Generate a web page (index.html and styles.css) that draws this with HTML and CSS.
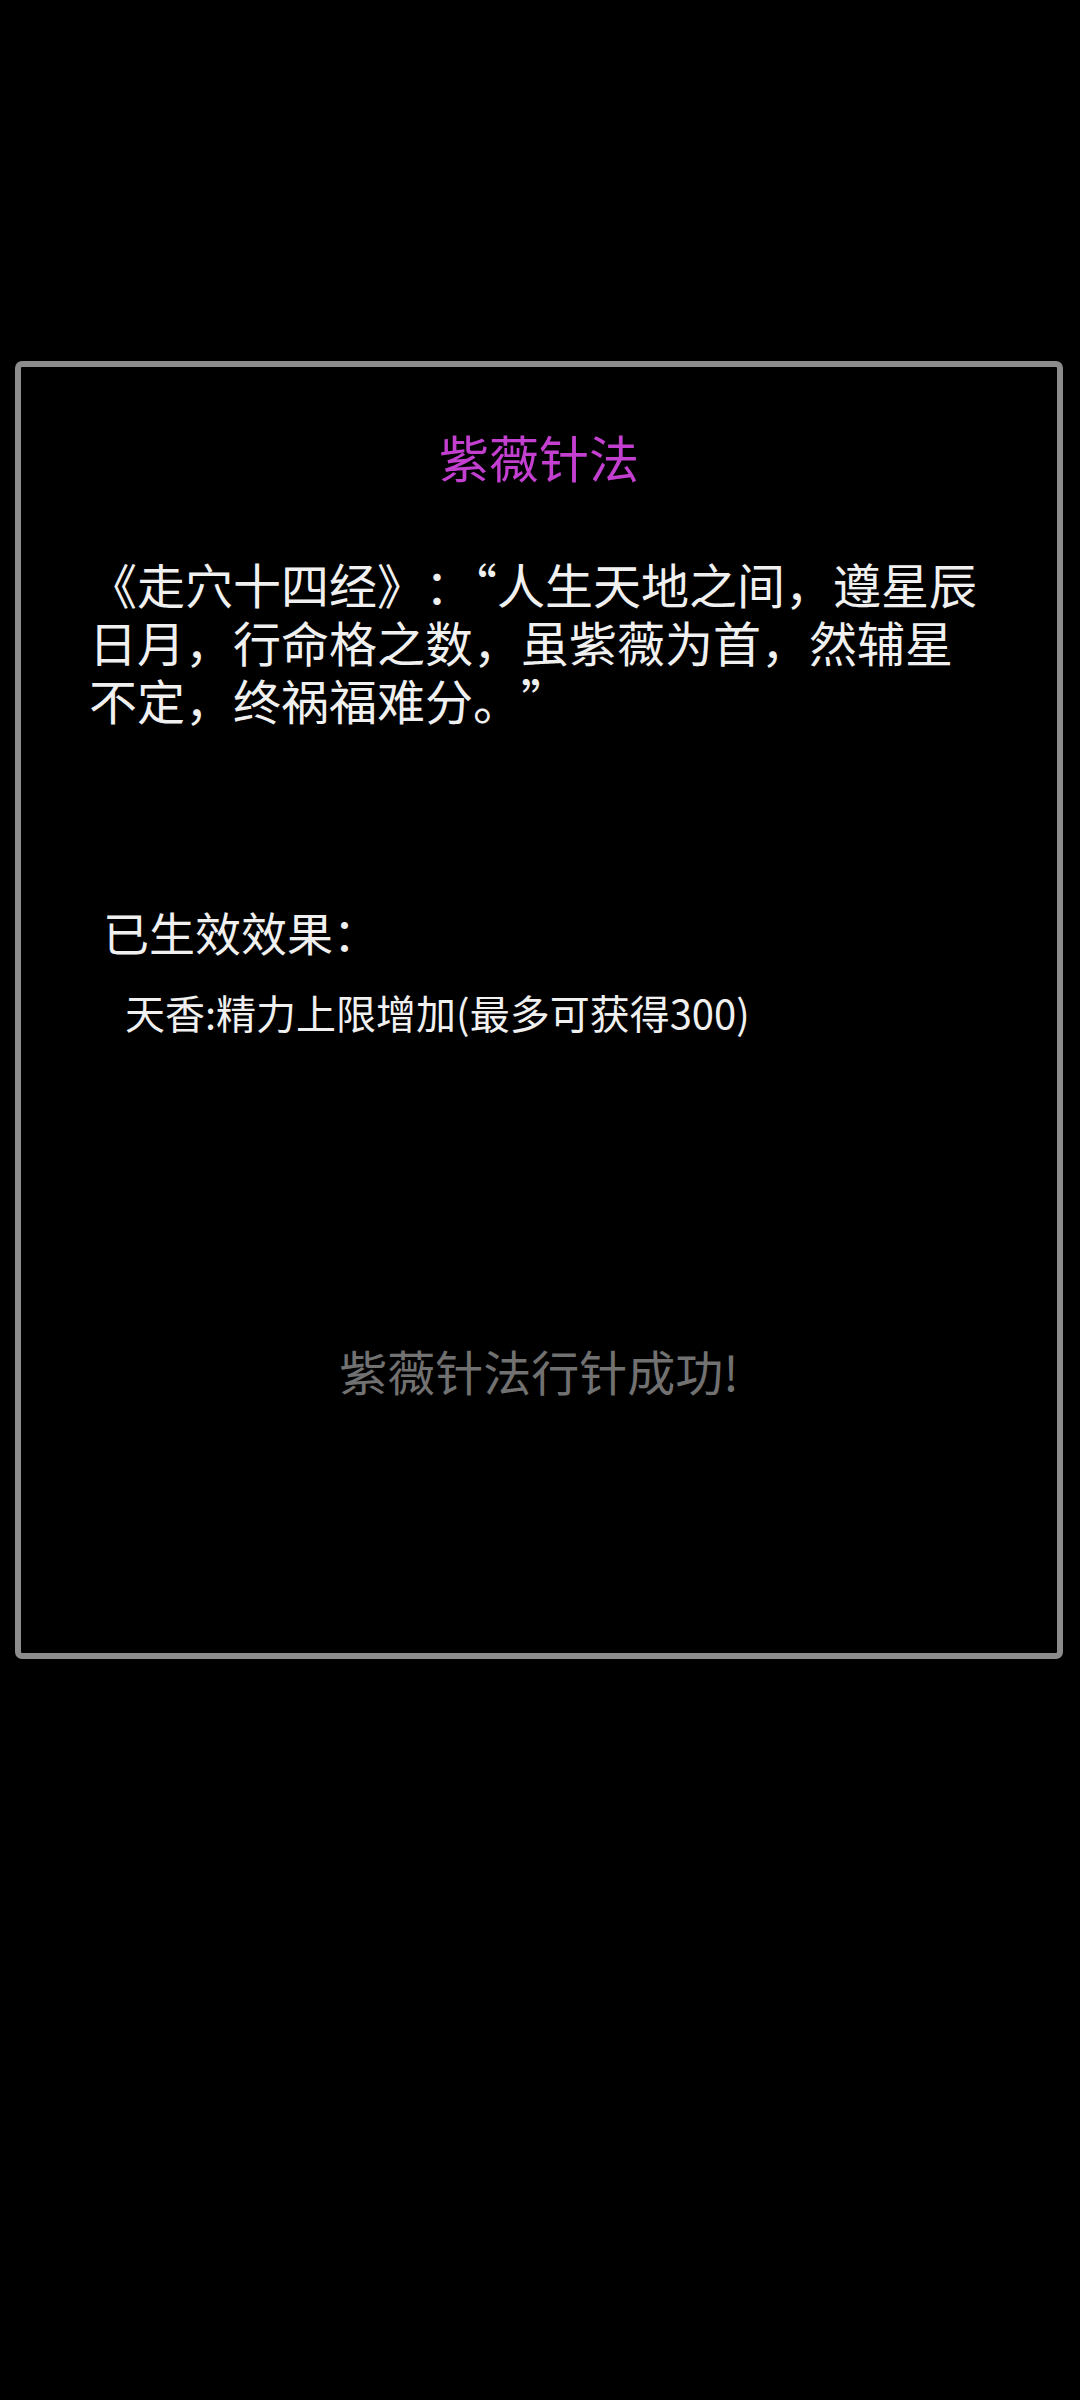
FILE: index.html
```html
<!DOCTYPE html>
<html lang="zh-CN">
<head>
    <meta charset="UTF-8">
    <meta name="viewport" content="width=device-width, initial-scale=1.0">
    <title>紫薇针法</title>
    <link rel="stylesheet" href="styles.css">
</head>
<body>
    <div class="screen">
        <div class="panel">
            <div class="panel-title">紫薇针法</div>
            <p class="quote">《走穴十四经》：<span class="half-punct">“</span>人生天地之间，遵星辰<br>日月，行命格之数，虽紫薇为首，然辅星<br>不定，终祸福难分。”</p>

            <div class="effects-title">已生效效果：</div>
            <div class="effect-item">天香:精力上限增加(最多可获得300)</div>

            <div class="result-text">紫薇针法行针成功!</div>
        </div>
    </div>
</body>
</html>
```

FILE: styles.css
```css
body {
    margin: 0;
    background: #000;
    font-family: "Noto Sans CJK SC", "Noto Sans", sans-serif;
    color: #f0f0f0;
    text-spacing-trim: space-all;
}
.screen {
    width: 1080px;
    height: 2400px;
    padding: 361px 17px 0 15px;
    box-sizing: border-box;
}
.panel {
    height: 1298px;
    border: 6px solid #8c8c8c;
    border-radius: 7px;
    padding: 60px 40px 0 68px;
    box-sizing: border-box;
}
.panel-title {
    text-align: center;
    margin-left: -28px;
    font-size: 50px;
    line-height: 58px;
    color: #c23fcf;
}
.quote {
    margin: 69px 0 0 0;
    font-size: 48px;
    line-height: 58px;
    white-space: nowrap;
}
.half-punct {
    font-feature-settings: "halt";
}
.effects-title {
    margin-top: 174px;
    padding-left: 14px;
    font-size: 46px;
    line-height: 58px;
}
.effect-item {
    margin-top: 27px;
    padding-left: 36px;
    font-size: 40px;
    line-height: 50px;
}
.result-text {
    margin-top: 304px;
    margin-left: -28px;
    text-align: center;
    font-size: 48px;
    line-height: 58px;
    color: #717171;
}
```
